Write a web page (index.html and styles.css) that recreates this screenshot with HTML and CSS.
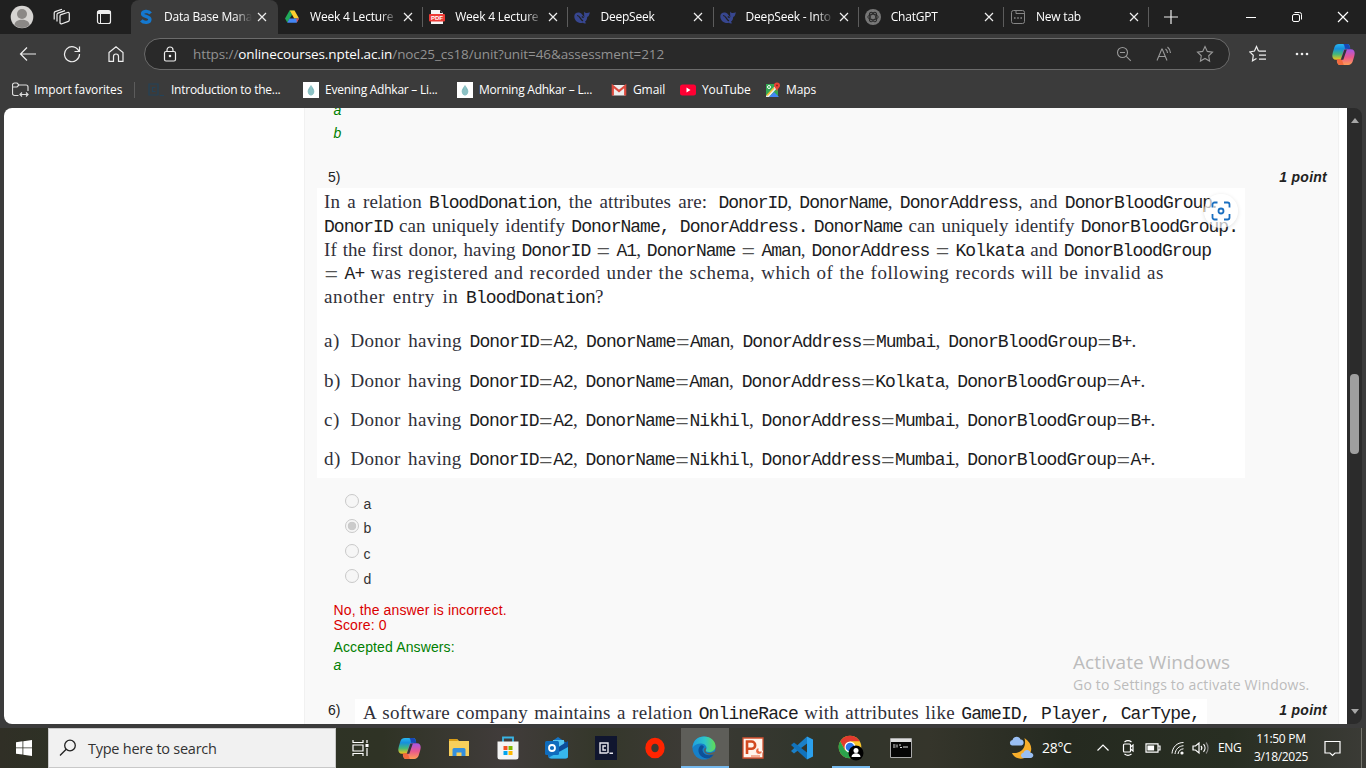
FILE: index.html
```html
<!DOCTYPE html>
<html lang="en">
<head>
<meta charset="utf-8">
<title>Data Base Management System</title>
<link rel="stylesheet" href="styles.css">
</head>
<body>
<svg width="0" height="0" class="defs">
  <defs>
    <linearGradient id="cpA" x1="0" y1="0" x2="0" y2="1"><stop offset="0" stop-color="#28b6f0"/><stop offset=".3" stop-color="#168fdd"/><stop offset=".65" stop-color="#45b879"/><stop offset="1" stop-color="#f5c518"/></linearGradient>
    <linearGradient id="cpB" x1="0" y1="0" x2="0" y2="1"><stop offset="0" stop-color="#a457e8"/><stop offset=".5" stop-color="#e9578e"/><stop offset="1" stop-color="#ff9d55"/></linearGradient>
    <linearGradient id="edA" x1="0" y1="0" x2="1" y2="0"><stop offset="0" stop-color="#1f9fe0"/><stop offset=".55" stop-color="#2fc6c8"/><stop offset="1" stop-color="#62dc52"/></linearGradient>
    <symbol id="x" viewBox="0 0 10 10"><path d="M1 1l8 8M9 1L1 9" fill="none" stroke="#eee" stroke-width="1.2"/></symbol>
    <symbol id="whale" viewBox="0 0 16 16"><path d="M.3 7.4C.2 4 3.5 2.700 6 3.800c2 .8 2.700 3 4.500 4.400C10 6 10 4.500 10.300 2.500c.9 1.200 1.500 1.600 2.500 1.500 1-.2 2-.6 3-.8-.3 2.800-1.200 4.200-2.600 4.800-.1 2.500-1 3.700-2.300 4.800l1.300 1.500c-1.700.3-2.700-.1-3.500-.5C4.500 14.800.3 11.500.3 7.400z" fill="#37468f"/><path d="M3 6.500c3 0 3.200 4.200 6 5.400M7.800 7.400l1.800 1.300" fill="none" stroke="#202020" stroke-width="1.200"/></symbol>
    <symbol id="copilot" viewBox="0 0 22 20"><path d="M6.500 0h8c2 0 2.300 1.500 3 4-2.500 0-3.500 0-4.500 3L10.500 15H4C0 15-.2 11.500.8 8L2.300 3C3 1 4.500 0 6.500 0z" fill="url(#cpA)"/><path d="M10.500 0h4c2 0 2.300 2 3 4.500h-5C12 2 11.500 0 10.500 0z" fill="#1747b8"/><path d="M15.500 20h-8c-2 0-2.300-1.500-3-4 2.500 0 3.500 0 4.500-3l2.500-8H18c4 0 4.200 3.500 3.200 7l-1.500 5c-.7 2-2.200 3-4.200 3z" fill="url(#cpB)"/><path d="M4.500 14.500h4.800l2 5.500H7.600c-2 0-2.500-2-3.100-5.500z" fill="#f26a3d"/><path d="M11.800 5.200h2.400L10.800 15H8.400z" fill="#33343a"/></symbol>
    <symbol id="drop" viewBox="0 0 16 16"><path d="M0 0h16v16H0z" fill="#fff"/><path d="M8 3c2 3 3.500 4.500 3.300 7-.4 2.300-2 3.500-3.300 3.500S5.100 12.300 4.700 10C4.500 7.500 6 6 8 3z" fill="#7fb9bd"/><path d="M8 4v9M6 8v4M10 8v4" stroke="#a7d2d3" stroke-width=".7"/></symbol>
  </defs>
</svg>

<header class="tabbar">
  <div class="tabtools">
    <svg width="24" height="24" viewBox="0 0 24 24"><circle cx="12" cy="12" r="11.300" fill="#d6d4d2"/><circle cx="12" cy="9" r="5" fill="#8b8886"/><path d="M4.500 20c0-7 15-7 15 0-4 4-11 4-15 0z" fill="#8b8886"/></svg>
    <svg width="18" height="18" viewBox="0 0 18 18" fill="none" stroke="#eee" stroke-width="1.200"><path d="M7 8a1.500 1.500 0 0 1 1-1.400L14.500 4.500a1.300 1.300 0 0 1 1.800 1.200V12a1.500 1.500 0 0 1-1 1.400L9 15.800a1.400 1.400 0 0 1-2-1.200zM4 13.500V6.500a1.500 1.500 0 0 1 1-1.400L12 2.600M1.200 11.500V5a1.500 1.500 0 0 1 1-1.400L9 1.200"/></svg>
    <svg width="16" height="16" viewBox="0 0 16 16" fill="none" stroke="#eee"><rect x="1.500" y="1.500" width="13" height="13" rx="2" stroke-width="1.200"/><path d="M1.500 3.500h13" stroke-width="3"/><path d="M4.500 4v10.500" stroke-width="1"/></svg>
  </div>
  <nav class="tabs">
    <div class="tab active"><svg class="fav" viewBox="0 0 16 16"><path d="M12.500 4.500C10.500 1.600 4.500 2 4.600 5c.1 3 7.400 2 7.300 5.500-.1 3.500-6 3.800-8.600.8" fill="none" stroke="#1478cf" stroke-width="3.400"/></svg><span class="title">Data Base Mana</span><svg class="x"><use href="#x"/></svg></div>
    <div class="tab"><svg class="fav" viewBox="0 0 16 16"><path d="M5.500 1.500h5L8 6z" fill="#139b4a"/><path d="M5.500 1.500L1 9.500l2.300 4L8 5.800z" fill="#21a95a"/><path d="M10.500 1.500L15 9.600h-4.800L5.700 1.500z" fill="#ffcd2e"/><path d="M5.500 9.600H15l-2.300 4.200H3.200z" fill="#4386f5"/><path d="M12.600 9.600H15l-2.200 4z" fill="#ea4335"/></svg><span class="title">Week 4 Lecture</span><svg class="x"><use href="#x"/></svg></div>
    <div class="tab"><svg class="fav" viewBox="0 0 16 16"><path d="M2 1h9l3 3v11H2z" fill="#f4f4f4"/><path d="M11 1v3h3" fill="#222"/><rect y="5" width="16" height="7.500" rx="1" fill="#ee3b36"/><text x="8" y="10.800" text-anchor="middle" class="pdf">PDF</text></svg><span class="title">Week 4 Lecture</span><svg class="x"><use href="#x"/></svg></div>
    <div class="tab"><svg class="fav"><use href="#whale"/></svg><span class="title">DeepSeek</span><svg class="x"><use href="#x"/></svg></div>
    <div class="tab"><svg class="fav"><use href="#whale"/></svg><span class="title">DeepSeek - Into</span><svg class="x"><use href="#x"/></svg></div>
    <div class="tab"><svg class="fav" viewBox="0 0 16 16"><circle cx="8" cy="8" r="8" fill="#777"/><g fill="none" stroke="#282828" stroke-width=".9"><ellipse cx="8" cy="8" rx="5.200" ry="2.700"/><ellipse cx="8" cy="8" rx="5.200" ry="2.700" transform="rotate(60 8 8)"/><ellipse cx="8" cy="8" rx="5.200" ry="2.700" transform="rotate(120 8 8)"/></g></svg><span class="title">ChatGPT</span><svg class="x"><use href="#x"/></svg></div>
    <div class="tab"><svg class="fav" viewBox="0 0 16 16" fill="none" stroke="#858585"><rect x="1.500" y="1.500" width="13" height="13" rx="2"/><path d="M6 1.500v3h8.500"/><path d="M4 9h8" stroke-width="1.500" stroke-dasharray="1.600 1.600"/></svg><span class="title">New tab</span><svg class="x"><use href="#x"/></svg></div>
  </nav>
  <svg class="plus" width="14" height="14" viewBox="0 0 14 14"><path d="M7 0v14M0 7h14" stroke="#eee" stroke-width="1.200"/></svg>
  <div class="winctl">
    <svg width="12" height="12"><path d="M1 6.500h10" stroke="#fff"/></svg>
    <svg width="12" height="12" fill="none" stroke="#fff"><rect x="1.500" y="3.500" width="7" height="7" rx="1.500"/><path d="M3.500 1.500h5a2 2 0 0 1 2 2v5"/></svg>
    <svg width="12" height="12"><path d="M1 1l10 10M11 1L1 11" stroke="#fff" stroke-width="1.200"/></svg>
  </div>
</header>

<div class="toolbar">
  <div class="navbtns">
    <svg width="18" height="18" viewBox="0 0 18 18"><path d="M17 9H1.500M8 2.500L1.500 9 8 15.500"/></svg>
    <svg width="18" height="18" viewBox="0 0 18 18"><path d="M16 6.500A7.500 7.500 0 1 0 16.500 9M16.500 1.500v5h-5"/></svg>
    <svg width="18" height="18" viewBox="0 0 18 18"><path d="M2 7.500L9 1.700l7 5.800v8.800h-4.500V11.500a2.500 2.500 0 0 0-5 0v4.800H2z"/></svg>
  </div>
  <div class="address">
    <svg width="14" height="16" viewBox="0 0 14 16" fill="none" stroke="#eee" stroke-width="1.200"><rect x="1.500" y="5.500" width="11" height="9.500" rx="1.500"/><path d="M4 5.500V4a3 3 0 0 1 6 0v1.500"/><circle cx="7" cy="10" r=".7" fill="#eee"/></svg>
    <span class="url">https://<b>onlinecourses.nptel.ac.in</b>/noc25_cs18/unit?unit=46&amp;assessment=212</span>
    <div class="addrtools">
      <svg width="16" height="16" viewBox="0 0 16 16"><circle cx="6.500" cy="6.500" r="5"/><path d="M4 6.500h5M10.300 10.300l4.500 4.500"/></svg>
      <svg width="16" height="16" viewBox="0 0 16 16"><path d="M1 14.500L5.800 3h.4L11 14.500M2.700 10.500h6.600M9.500 3a5 5 0 0 1 2 4M11.500 1a8 8 0 0 1 3 6"/></svg>
      <svg width="18" height="18" viewBox="0 0 18 18"><path d="M9 1.500l2.300 4.900 5.200.7-3.800 3.700.9 5.300L9 13.500l-4.600 2.600.9-5.300L1.500 7.100l5.200-.7z"/></svg>
    </div>
  </div>
  <div class="righttools">
    <svg width="18" height="18" viewBox="0 0 18 18"><path d="M9.500 6L7.500 1.500 5.500 6 .8 7l3.500 3.300-.8 5.500 4-2.300M9.500 6.200H17M10 10.200h7M10 14.200h7"/></svg>
    <svg width="16" height="4" viewBox="0 0 16 4"><g fill="#eee" stroke="none"><circle cx="3" cy="2" r="1.300"/><circle cx="8" cy="2" r="1.300"/><circle cx="13" cy="2" r="1.300"/></g></svg>
    <svg class="plain" width="23" height="21"><use href="#copilot"/></svg>
  </div>
</div>

<nav class="bookmarks">
  <a class="bm first"><svg width="17" height="16" viewBox="0 0 17 16" fill="none" stroke="#ddd" stroke-width="1.200"><path d="M6.500 13.500H2.500a2 2 0 0 1-2-2V3a2 2 0 0 1 2-2H5l2 2h7a2 2 0 0 1 2 2v4M.5 5H5l2-2M8 12.500h8M10 10.500l-2 2 2 2M14 10.500l2 2-2 2"/></svg>Import favorites</a>
  <a class="bm intro"><svg width="16" height="16" viewBox="0 0 16 16" fill="none" stroke="#244359" stroke-width="1.200"><path d="M10 13H1V2h9v11M7.500 5.500h-3v4h3M11.500 13.500H16"/></svg>Introduction to the...</a>
  <a class="bm even"><svg width="16" height="16"><use href="#drop"/></svg>Evening Adhkar – Li...</a>
  <a class="bm morn"><svg width="16" height="16"><use href="#drop"/></svg>Morning Adhkar – L...</a>
  <a class="bm gmail"><svg width="16" height="16" viewBox="0 0 16 16"><path d="M1.500 3h13v10.500h-13z" fill="#eee"/><path d="M1.800 13.500V4L8 9l6.200-5v9.500" fill="none" stroke="#dc4a3e" stroke-width="2.200"/></svg>Gmail</a>
  <a class="bm yt"><svg width="16" height="16" viewBox="0 0 16 16"><rect y="2.500" width="16" height="11" rx="2.500" fill="#ff0033"/><path d="M6.500 5.500v5l4-2.500z" fill="#fff"/></svg>YouTube</a>
  <a class="bm maps"><svg width="16" height="16" viewBox="0 0 16 16"><path d="M1 2h12v13H1z" fill="#34a853"/><path d="M1 14L11 3l2 2-9 10H1z" fill="#eee"/><path d="M4 15l5-5 5 5z" fill="#4285f4"/><path d="M9 6l-7 7.500" stroke="#fbc02d" stroke-width="1.500"/><circle cx="4" cy="5" r="1.500" fill="none" stroke="#fff"/><path d="M12 .5a3 3 0 0 1 3 3c0 2-2 2.500-3 6-1-3.500-3-4-3-6a3 3 0 0 1 3-3z" fill="#ea4335"/><circle cx="12" cy="3.500" r="1" fill="#8c241c"/></svg>Maps</a>
</nav>

<main class="viewport">
  <div class="page">
    <section class="quiz">
      <p class="ans prev">a</p>
      <p class="ans second">b</p>
      <div class="qhead"><span>5)</span><em>1 point</em></div>
      <article class="figure">
        <p class="ln para l1">In a relation <code>BloodDonation</code>, the attributes are: <code class="pad">DonorID</code>, <code>DonorName</code>, <code>DonorAddress</code>, and <code>DonorBloodGroup</code>.</p>
        <p class="ln para l2"><code>DonorID</code> can uniquely identify <code>DonorName,</code> <code class="pad">DonorAddress.</code> <code>DonorName</code> can uniquely identify <code>DonorBloodGroup.</code></p>
        <p class="ln para l3">If the first donor, having <code>DonorID</code> <i>=</i> <code>A1</code>, <code>DonorName</code> <i>=</i> <code>Aman</code>, <code>DonorAddress</code> <i>=</i> <code>Kolkata</code> and <code>DonorBloodGroup</code></p>
        <p class="ln l4"><i>=</i> <code>A+</code> was registered and recorded under the schema, which of the following records will be invalid as</p>
        <p class="ln l5">another entry in <code>BloodDonation</code>?</p>
        <div class="opts">
          <div class="opt"><span>a)</span><p class="ln oa">Donor having <code>DonorID</code><i>=</i><code>A2</code>, <code>DonorName</code><i>=</i><code>Aman</code>, <code>DonorAddress</code><i>=</i><code>Mumbai</code>, <code>DonorBloodGroup</code><i>=</i><code>B+</code>.</p></div>
          <div class="opt"><span>b)</span><p class="ln ob">Donor having <code>DonorID</code><i>=</i><code>A2</code>, <code>DonorName</code><i>=</i><code>Aman</code>, <code>DonorAddress</code><i>=</i><code>Kolkata</code>, <code>DonorBloodGroup</code><i>=</i><code>A+</code>.</p></div>
          <div class="opt"><span>c)</span><p class="ln oc">Donor having <code>DonorID</code><i>=</i><code>A2</code>, <code>DonorName</code><i>=</i><code>Nikhil</code>, <code>DonorAddress</code><i>=</i><code>Mumbai</code>, <code>DonorBloodGroup</code><i>=</i><code>B+</code>.</p></div>
          <div class="opt"><span>d)</span><p class="ln oc">Donor having <code>DonorID</code><i>=</i><code>A2</code>, <code>DonorName</code><i>=</i><code>Nikhil</code>, <code>DonorAddress</code><i>=</i><code>Mumbai</code>, <code>DonorBloodGroup</code><i>=</i><code>A+</code>.</p></div>
        </div>
        <div class="lens"><svg width="20" height="20" viewBox="0 0 20 20" fill="none" stroke="#1a6fc0" stroke-width="1.800"><path d="M1.500 6.500v-3a2 2 0 0 1 2-2h3M13 1.500h3.500a2 2 0 0 1 2 2v3M18.500 13v3.500a2 2 0 0 1-2 2H13M6.500 18.500h-3a2 2 0 0 1-2-2V13"/><circle cx="10" cy="10" r="2.500"/></svg></div>
      </article>
      <ul class="radios">
        <li><span class="radio"></span><label>a</label></li>
        <li><span class="radio on"></span><label class="up">b</label></li>
        <li><span class="radio"></span><label>c</label></li>
        <li><span class="radio"></span><label>d</label></li>
      </ul>
      <p class="wrong">No, the answer is incorrect.<br>Score: 0</p>
      <p class="right">Accepted Answers:</p>
      <p class="ans">a</p>
      <div class="qhead last"><span>6)</span><article class="figure two"><p class="ln l6">A software company maintains a relation <code>OnlineRace</code> with attributes like <code>GameID,</code> <code class="pad">Player,</code> <code class="pad">CarType,</code></p></article><em>1 point</em></div>
    </section>
  </div>
  <div class="scroll"><span class="up-arrow"></span><span class="thumb"></span><span class="down-arrow"></span></div>
  <div class="watermark"><div>Activate Windows</div><small>Go to Settings to activate Windows.</small></div>
</main>

<footer class="taskbar">
  <div class="start"><svg width="16" height="16" viewBox="0 0 16 16" fill="#fff"><path d="M0 2.200l6.500-.9v6.200H0zM7.300 1.200L16 0v7.500H7.300zM0 8.300h6.500v6.300L0 13.700zM7.300 8.300H16V16l-8.700-1.200z"/></svg></div>
  <div class="search"><svg width="18" height="18" viewBox="0 0 18 18" fill="none" stroke="#222" stroke-width="1.300"><circle cx="11" cy="6.500" r="5.300"/><path d="M7.200 10.300L1 16.500"/></svg><span>Type here to search</span></div>
  <div class="apps">
    <div><svg width="17" height="16" viewBox="0 0 17 16" fill="none" stroke="#fff" stroke-width="1.200"><path d="M1 0v2.500h10V0M1 16v-2.500h10V16M1 5h10v6H1zM15 0v3M15 8v8"/><path d="M15 4v3" stroke-width="3"/></svg></div>
    <div><svg width="23" height="21"><use href="#copilot"/></svg></div>
    <div><svg width="22" height="20" viewBox="0 0 22 20"><path d="M1 1h8l2 2h10v15H1z" fill="#f8cf5b"/><path d="M1 1h8l1 2H1z" fill="#d99d16"/><path d="M4.500 18v-6.500a1.500 1.500 0 0 1 1.500-1.500h10a1.500 1.500 0 0 1 1.500 1.500V18h-4v-3.500h-5V18z" fill="#358fdd"/></svg></div>
    <div><svg width="22" height="24" viewBox="0 0 22 24"><path d="M6 7V1.500h10V7" fill="none" stroke="#39b4e5" stroke-width="1.800"/><path d="M.5 5.500h21V21a2.500 2.500 0 0 1-2.500 2.500H3A2.500 2.500 0 0 1 .5 21z" fill="#f4f4f4"/><path d="M6.500 10h4v4h-4z" fill="#f25022"/><path d="M11.500 10h4v4h-4z" fill="#7fba00"/><path d="M6.500 15h4v4h-4z" fill="#00a4ef"/><path d="M11.500 15h4v4h-4z" fill="#ffb900"/></svg></div>
    <div><svg width="24" height="24" viewBox="0 0 24 24"><path d="M3 8L13 1l10 7v12a2.500 2.500 0 0 1-2.500 2.500H6A2.500 2.500 0 0 1 3 20z" fill="#1474c4"/><path d="M8 4h11v12H8z" fill="#55c6f2"/><path d="M12 12l11-7v7l-8 5z" fill="#0c4d9b"/><path d="M4 21.500L23 11v9a2.500 2.500 0 0 1-2.500 2.500H6z" fill="#37b7ec"/><rect y="5" width="14" height="14" rx="1.500" fill="#0f6cbd"/><circle cx="7" cy="12" r="3" fill="none" stroke="#fff" stroke-width="1.800"/></svg></div>
    <div><svg width="22" height="24" viewBox="0 0 22 24"><path d="M0 0h22v24H0z" fill="#10162f"/><path d="M12.500 17H5V7h8v10M11 10H8v4h3M14.500 17.300H18" fill="none" stroke="#e8e8ee" stroke-width="1.400"/></svg></div>
    <div><svg width="20" height="22" viewBox="0 0 20 22"><ellipse cx="10" cy="11" rx="6.700" ry="7.300" fill="none" stroke="#ff2400" stroke-width="6"/></svg></div>
    <div class="current"><svg width="24" height="24" viewBox="0 0 24 24"><circle cx="12" cy="12" r="11.500" fill="#1580c9"/><path d="M.5 12C1 4 6 .5 12 .5c7 0 11.500 5 11.500 9.500 0 4-3 6-6.500 6-2.500 0-3.500-1-3-2 2-3-1-6.500-5-6.500C5 7.500 2 9 .5 12z" fill="url(#edA)"/><path d="M8 10c-4 5 0 12 7 12.500 3 0 5.500-2 7-4.500-4 2-9 1.500-11-2-1-2-.5-4 1-5-1-2-3-2-4-1z" fill="#0d5199"/><path d="M13.800 13.500c-.8 1.500 0 3.500 3 3.500 2.500 0 4-.5 7.200-2v3l-1.500.2c-4 1.500-8.500.3-10-2.200-1-2 0-4 1.300-4.500z" fill="#5e5e59"/></svg></div>
    <div><svg width="22" height="22" viewBox="0 0 22 22"><path d="M1 1h20v20H1z" fill="#fff4ec" stroke="#d35230" stroke-width="1.300"/><path d="M5 17V4.500h4.500a3.600 3.600 0 0 1 0 7.300H5" fill="none" stroke="#d2491f" stroke-width="2.600"/><path d="M17 10.500a3.500 3.500 0 1 0 3.500 3.500H17z" fill="#e86a43" stroke="#fff"/><path d="M9 19h9" stroke="#e86a43"/></svg></div>
    <div><svg width="24" height="24" viewBox="0 0 24 24"><path d="M17 .5v7L4 17.500l-3-2.500L17 .5z" fill="#1b80c8"/><path d="M17 23.500v-7L4 6.500 1 9z" fill="#1173bd"/><path d="M17 .5l6 3v17l-6 3z" fill="#2ba0ed"/></svg></div>
    <div class="running"><svg width="26" height="26" viewBox="0 0 26 26"><circle cx="12" cy="12" r="11.300" fill="#f9c52c"/><path d="M2.200 6.300A11.300 11.300 0 0 1 21.800 6.300H12L7 15z" fill="#e23a2e"/><path d="M2.200 6.300A11.300 11.300 0 0 0 12 23.300l4.500-8H7z" fill="#2ba24c"/><circle cx="12" cy="12" r="5.500" fill="#fff"/><circle cx="12" cy="12" r="4.300" fill="#2b73e8"/><circle cx="18" cy="18" r="7.500" fill="#000"/><circle cx="18" cy="15.500" r="2.500" fill="#fff"/><path d="M13.500 22c0-5 9-5 9 0z" fill="#fff"/></svg></div>
    <div><svg width="22" height="20" viewBox="0 0 22 20"><path d="M.5.500h21v19H.5z" fill="#050505" stroke="#aaa"/><path d="M1 1h20v3H1z" fill="#ddd"/><path d="M3 7h2.500M3 9h2.500M7 6.500V9.500M9 7h2M10 9.500h2M13 9h5" stroke="#ddd"/></svg></div>
  </div>
  <div class="tray">
    <svg class="moon" width="25" height="24" viewBox="0 0 25 24"><path d="M15.500 2c9 6 9 16 0 20-6 2-11-1-12.500-5 9 1 15-5 12.500-15z" fill="#f7ae2b"/><path d="M3 9.500a2.800 2.800 0 0 1 .5-5.500c1-4 7-4.300 8-.5 4-.2 4 5.500 1 6zM14 22a2.700 2.700 0 0 1 .5-5.300c1-3.500 6-3.500 7 0 4 .3 3.500 5.300 0 5.300z" fill="#9abff3"/></svg>
    <span class="temp">28°C</span>
    <svg class="t1" width="14" height="10" viewBox="0 0 14 10"><path d="M1.500 7.500L7 2l5.500 5.500"/></svg>
    <svg class="t2" width="13" height="16" viewBox="0 0 13 16"><rect x="1.500" y="4" width="7" height="8" rx="1"/><path d="M8.500 7l2.500-2v6L8.500 9M2.500 2c2-1.500 5-1.500 7 0M2.500 14c2 1.500 5 1.500 7 0"/></svg>
    <svg class="t3" width="16" height="10" viewBox="0 0 16 10"><path d="M1 .8h12v8.400H1zM13.500 3h1.500v4h-1.500"/><path d="M3 3h5.500v4H3z" fill="#fff"/></svg>
    <svg class="t4" width="14" height="14" viewBox="0 0 14 14"><path d="M1 12.500C1.500 6 6 1.500 12.500 1.500M4 13C4.500 8 8 5 12.500 4.700M7 13c.3-3 2.500-5 5.500-5.200" stroke-width="1"/><circle cx="11" cy="12" r="1" fill="#fff"/></svg>
    <svg class="t5" width="17" height="14" viewBox="0 0 17 14"><path d="M1 5v4h2.500L7 12V2L3.500 5zM9 5c1 1.200 1 2.800 0 4M11.500 3.200c2 2.200 2 5.400 0 7.600"/><path d="M14 1.500c2.700 3.200 2.700 7.800 0 11" stroke="#888"/></svg>
    <span class="lang">ENG</span>
    <div class="clock">11:50 PM<br>3/18/2025</div>
    <svg class="t6" width="17" height="17" viewBox="0 0 17 17"><path d="M1 1.500h15v11.500h-5L8.500 15.500 6 13H1z"/></svg>
    <span class="peek"></span>
  </div>
</footer>
</body>
</html>
```
FILE: styles.css
```css
* { box-sizing: border-box; }
body {
  margin: 0; width: 1366px; height: 768px; overflow: hidden;
  display: flex; flex-direction: column; background: #3b3b3b; color: #fff;
  font: 12px/16px "Open Sans", "Noto Sans", sans-serif;
}
svg { flex: none; display: block; }
.defs { position: absolute; }
p, ul { margin: 0; padding: 0; }

/* tab strip */
.tabbar { height: 34px; flex: none; display: flex; background: #202020; align-items: center; }
.tabtools { width: 131px; flex: none; display: flex; align-items: center; padding-left: 10px; gap: 19px; }
.tabtools svg:last-child { margin-left: 6px; }
.tabs { display: flex; height: 34px; width: 1019px; flex: none; }
.tab {
  flex: 0 0 145.2px; display: flex; align-items: center; padding-left: 6px;
  background: linear-gradient(#5c5c5c, #5c5c5c) right center / 1px 20px no-repeat;
}
.tab.active { flex-basis: 147px; padding-left: 7px; background: #3b3b3b; border-radius: 8px 8px 0 0; }
.fav { width: 16px; height: 16px; }
.title {
  margin-left: 10px; width: 88px; overflow: hidden; white-space: nowrap; letter-spacing: -.2px;
  -webkit-mask-image: linear-gradient(90deg, #000 80%, transparent 100%);
  mask-image: linear-gradient(90deg, #000 80%, transparent 100%);
}
.x { width: 10px; height: 10px; margin-left: 5px; }
.pdf { font: bold 6px "Liberation Sans", sans-serif; fill: #fff; }
.plus { margin-left: 14px; }
.winctl { display: flex; gap: 34px; margin-left: auto; padding-right: 17px; }

/* toolbar */
.toolbar { height: 40px; flex: none; display: flex; align-items: center; }
.navbtns { width: 144px; flex: none; display: flex; gap: 26px; padding-left: 19px; }
.navbtns svg, .righttools svg { fill: none; stroke: #eee; stroke-width: 1.2; }
.address {
  width: 1086px; height: 32px; flex: none; display: flex; align-items: center;
  border: 1px solid #6b6b6b; border-radius: 16px; background: #292929; padding: 0 15px 0 18px;
}
.url { margin-left: 16px; font-size: 13.5px; line-height: 18px; color: #929292; letter-spacing: -.1px; }
.url b { font-weight: 400; color: #fff; }
.addrtools { margin-left: auto; display: flex; align-items: center; gap: 24px; fill: none; stroke: #999; stroke-width: 1.1; }
.righttools { display: flex; align-items: center; padding-left: 19px; gap: 27px; }
.righttools svg.plain { stroke: none; margin-left: -5px; }

/* favourites */
.bookmarks { height: 34px; flex: none; display: flex; align-items: center; padding: 0 0 3px 12px; letter-spacing: -.25px; }
.bm { display: flex; align-items: center; gap: 5px; white-space: nowrap; flex: none; }
.bm.first { width: 122px; letter-spacing: -.4px; letter-spacing: -.3px; }
.bm.intro { width: 169px; padding-left: 13px; gap: 7px; border-left: 1px solid #5c5c5c; }
.bm.first { letter-spacing: -.35px; }
.bm.even { width: 154px; gap: 6px; }
.bm.morn { width: 154px; gap: 6px; }
.bm.gmail { width: 69px; gap: 6px; }
.bm.yt { width: 85px; gap: 6px; }
.bm.first, .bm.gmail, .bm.yt, .bm.maps { letter-spacing: -.1px; }

/* page */
.viewport { position: relative; height: 616px; flex: none; margin: 0 4px; display: flex; border-radius: 8px; overflow: hidden; background: #2b2b2b; }
.page { width: 1343px; flex: none; background: #fff; }
.quiz {
  margin-left: 300px; width: 1035px; height: 616px; overflow: hidden; background: #f9f9f9;
  border: solid #f1f1f1; border-width: 0 1px; color: #222;
  font: 14px/18px "Liberation Sans", Arial, sans-serif;
}
.ans { margin-left: 28.5px; color: #008000; font-style: italic; }
.prev { margin-top: -7px; }
.second { margin-top: 5px; }
.qhead { margin: 26px 11px 0 23px; display: flex; justify-content: space-between; }
.qhead em { font-weight: 700; letter-spacing: .25px; }
.figure {
  position: relative; margin: 2px 0 0 12px; width: 928px; height: 290px; padding: 2px 0 0 7px; background: #fff;
  color: #30303a; font: 19px/23.75px "Liberation Serif", "Times New Roman", serif;
}
.ln { height: 23.75px; white-space: nowrap; text-align: justify; text-align-last: justify; letter-spacing: .3px; }
.ln code { font: 18px/20px "Liberation Mono", "Courier New", monospace; letter-spacing: -.88px; color: #1c1c22; }
.ln.para { letter-spacing: .08px; }
.ln.para code { letter-spacing: -.98px; }
.ln i {
  display: inline-block; width: 14.5px; text-align: center; text-align-last: center; vertical-align: -3px;
  font: 24px/16px "Liberation Serif", serif; letter-spacing: 0; color: #555;
}
.l1 { width: 893px; }
.l2 { width: 914px; }
.l3 { width: 887px; }
.ln.l4 { width: 840px; letter-spacing: .55px; }
.ln.l5 { width: 280px; letter-spacing: .6px; }
.l6 { width: 837px; }
.opts { margin-top: 13px; }
.opt { display: flex; height: 39.1px; align-items: center; }
.opt span { width: 26.5px; flex: none; letter-spacing: .5px; }
.oa { width: 786px; }
.ob { width: 795px; }
.oc { width: 805px; }
.lens {
  position: absolute; left: 887px; top: 6px; width: 34px; height: 34px; border-radius: 50%;
  background: rgba(255,255,255,.7); box-shadow: 0 1px 4px rgba(0,0,0,.12);
  display: flex; align-items: center; justify-content: center;
}
.radios { list-style: none; margin: 14px 0 0 40px; }
.radios li { height: 25.1px; display: flex; gap: 4.5px; }
.radio { width: 14px; height: 14px; margin-top: 2px; border: 1px solid #c9c9c9; border-radius: 50%; background: #f6f6f6; }
.radio.on { background: radial-gradient(circle, #cbcbcb 0 4px, #f6f6f6 4.6px); }
.radios label { margin-top: 3px; color: #333; }
.radios label.up { margin-top: 2px; }
.wrong { margin: 10.4px 0 0 28.5px; line-height: 15px; color: #d90000; letter-spacing: .13px; }
.right { margin: 5px 0 0 28.5px; color: #008000; letter-spacing: .13px; }
.qhead.last { margin-top: 25px; align-items: flex-start; }
.last > em { margin-left: auto; margin-top: 2px; }
.last > span { margin-top: 2px; width: 27px; }
.figure.two { margin: 0; width: 852px; height: 26px; padding-left: 8px; padding-top: 2px; }
.pad { margin-left: 4px; }
.scroll { width: 15px; display: flex; flex-direction: column; align-items: center; }
.up-arrow, .down-arrow { border: 4px solid transparent; border-top: 0; border-bottom: 5px solid #a6a6a6; margin-top: 10px; }
.thumb { width: 9px; height: 80px; border-radius: 4px; background: #9f9f9f; margin-top: 251px; }
.down-arrow { border-bottom: 0; border-top: 5px solid #a6a6a6; margin: auto 0 10px; }
.watermark { position: absolute; left: 1069px; top: 543px; color: #bcbcbc; white-space: nowrap; }
.watermark div { font-size: 19px; line-height: 23px; letter-spacing: .08px; }
.watermark small { display: block; font-size: 14px; line-height: 22px; letter-spacing: .2px; }

/* taskbar */
.taskbar {
  height: 40px; flex: none; margin-top: 4px; display: flex;
  background: linear-gradient(90deg, #302f26, #2c3324 8%, #2f3325 28%, #413c3b 37%, #34372a 44%, #3c3a35 50%, #30352b 60%, #35352b 68%, #252a20 78%, #282e22 90%, #3b3b36);
}
.start { width: 48px; display: flex; align-items: center; justify-content: center; }
.search { width: 288px; display: flex; align-items: center; gap: 11px; padding-left: 10px; color: #333; background: #f1f1f1; border: 1px solid #c8c8c8; font-size: 14.5px; letter-spacing: -.25px; }
.search span { padding-top: 1px; }
.apps { display: flex; }
.apps > div { width: 49.1px; display: flex; align-items: center; justify-content: center; }
.apps > .current { background: linear-gradient(#76b9ed, #76b9ed) right bottom / 48px 2px no-repeat, linear-gradient(#5e5e59, #5e5e59) right top / 48px 40px no-repeat; }
.apps > .running { background: linear-gradient(#76b9ed, #76b9ed) center bottom / 38px 2px no-repeat; }
.tray { margin-left: auto; display: flex; align-items: center; fill: none; stroke: #fff; stroke-width: 1.2; }
.moon { stroke: none; }
.temp { width: 46px; margin-left: 8px; font-size: 14px; letter-spacing: -.3px; }
.t1 { margin-left: 8px; }
.t2 { margin-left: 12px; }
.t3 { margin-left: 10px; }
.t4 { margin-left: 10px; }
.t5 { margin-left: 7px; }
.lang { width: 24px; margin-left: 9px; letter-spacing: -.3px; }
.clock { width: 64px; margin-left: 7px; text-align: center; line-height: 18px; letter-spacing: -.3px; }
.t6 { margin-left: 11px; }
.peek { width: 1px; height: 40px; background: #77776f; margin: 0 4px 0 20px; }
```
